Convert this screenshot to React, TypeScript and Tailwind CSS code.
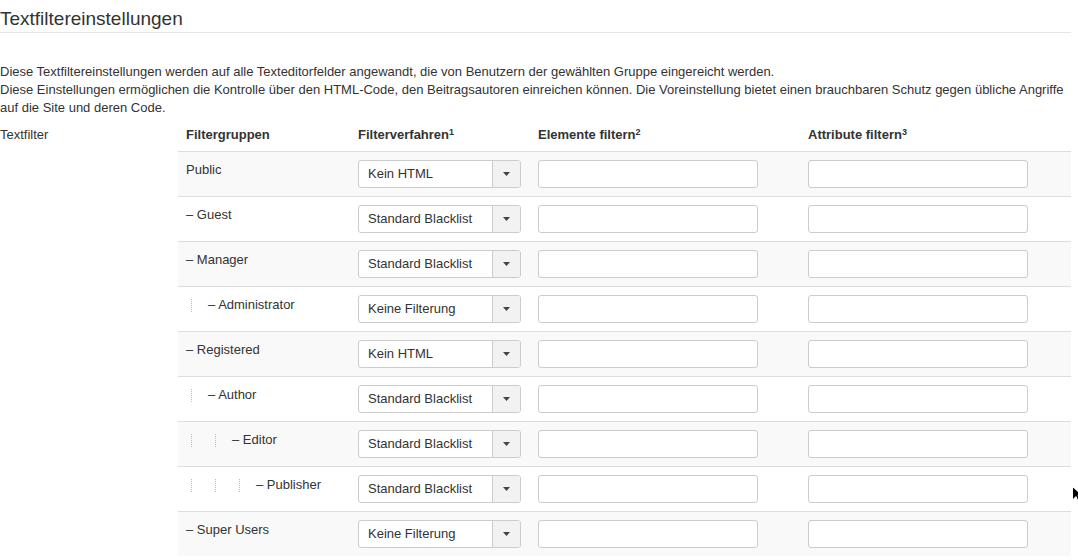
import React from 'react'

type Row = { name: string; level: number; filter: string }

const rows: Row[] = [
  { name: 'Public', level: 0, filter: 'Kein HTML' },
  { name: 'Guest', level: 1, filter: 'Standard Blacklist' },
  { name: 'Manager', level: 1, filter: 'Standard Blacklist' },
  { name: 'Administrator', level: 2, filter: 'Keine Filterung' },
  { name: 'Registered', level: 1, filter: 'Kein HTML' },
  { name: 'Author', level: 2, filter: 'Standard Blacklist' },
  { name: 'Editor', level: 3, filter: 'Standard Blacklist' },
  { name: 'Publisher', level: 4, filter: 'Standard Blacklist' },
  { name: 'Super Users', level: 1, filter: 'Keine Filterung' },
]

const Select = ({ value }: { value: string }) => (
  <div className='flex w-[163px] h-[28px] rounded-[3px] border border-[#ccc] bg-white overflow-hidden'>
    <span className='flex-1 pl-[9px] leading-[26px] text-[#333]'>{value}</span>
    <span className='w-[28px] border-l border-[#ccc] bg-[#f2f2f2] flex items-center justify-center'>
      <svg width='7' height='4' viewBox='0 0 7 4'>
        <path d='M0 0 L7 0 L3.5 4 Z' fill='#444' />
      </svg>
    </span>
  </div>
)

const TextInput = () => (
  <input type='text' className='block w-[220px] h-[28px] rounded-[3px] border border-[#ccc] bg-white outline-none' />
)

const App = () => {
  return (
    <div className="relative w-[1071px] text-[13px] leading-[18px] text-[#333] font-['Liberation_Sans',Arial,sans-serif]">
      {/* Titel */}
      <h2 className='pt-[7px] pb-[1px] text-[19px] leading-[24px] font-normal border-b border-[#e5e5e5]'>
        Textfiltereinstellungen
      </h2>

      <p className='mt-[30px]'>
        Diese Textfiltereinstellungen werden auf alle Texteditorfelder angewandt, die von Benutzern der gewählten Gruppe eingereicht werden.
        <br />
        Diese Einstellungen ermöglichen die Kontrolle über den HTML-Code, den Beitragsautoren einreichen können. Die Voreinstellung bietet einen brauchbaren Schutz gegen übliche Angriffe
        <br />
        auf die Site und deren Code.
      </p>

      <div className='flex mt-[2px]'>
        <div className='w-[178px] pt-[7px]'>Textfilter</div>
        <table className='flex-1 border-collapse'>
          <thead>
            <tr className='text-left'>
              <th className='w-[172px] px-[8px] py-[7px] font-bold'>Filtergruppen</th>
              <th className='w-[180px] px-[8px] py-[7px] font-bold'>
                Filterverfahren<sup className='text-[9px]'>1</sup>
              </th>
              <th className='w-[270px] px-[8px] py-[7px] font-bold'>
                Elemente filtern<sup className='text-[9px]'>2</sup>
              </th>
              <th className='px-[8px] py-[7px] font-bold'>
                Attribute filtern<sup className='text-[9px]'>3</sup>
              </th>
            </tr>
          </thead>
          <tbody>
            {rows.map((row, i) => (
              <tr key={row.name} className={i % 2 === 0 ? 'bg-[#f9f9f9]' : 'bg-white'}>
                <td className='align-top border-t border-[#ddd] px-[8px] pt-[9px] pb-[8px] whitespace-nowrap'>
                  {Array.from({ length: Math.max(row.level - 1, 0) }).map((_, k) => (
                    <span key={k} className='inline-block align-middle ml-[5px] mr-[18px] w-px h-[13px] border-l border-dotted border-[#bbb]' />
                  ))}
                  <span className={row.level > 1 ? '-ml-[2px]' : ''}>
                    {row.level > 0 ? '– ' : ''}
                    {row.name}
                  </span>
                </td>
                <td className='align-top border-t border-[#ddd] px-[8px] pt-[8px] pb-[8px]'>
                  <Select value={row.filter} />
                </td>
                <td className='align-top border-t border-[#ddd] px-[8px] pt-[8px] pb-[8px]'>
                  <TextInput />
                </td>
                <td className='align-top border-t border-[#ddd] px-[8px] pt-[8px] pb-[8px]'>
                  <TextInput />
                </td>
              </tr>
            ))}
          </tbody>
        </table>
      </div>

      {/* Mauszeiger */}
      <svg className='absolute left-[1072px] top-[486px]' width='12' height='18' viewBox='0 0 12 18'>
        <path d='M0.5 0.5 L0.5 14 L4 10.5 L6.5 16.5 L8.5 15.5 L6 9.5 L10.5 9.5 Z' fill='#000' stroke='#fff' strokeWidth='1' />
      </svg>
    </div>
  )
}

export default App
